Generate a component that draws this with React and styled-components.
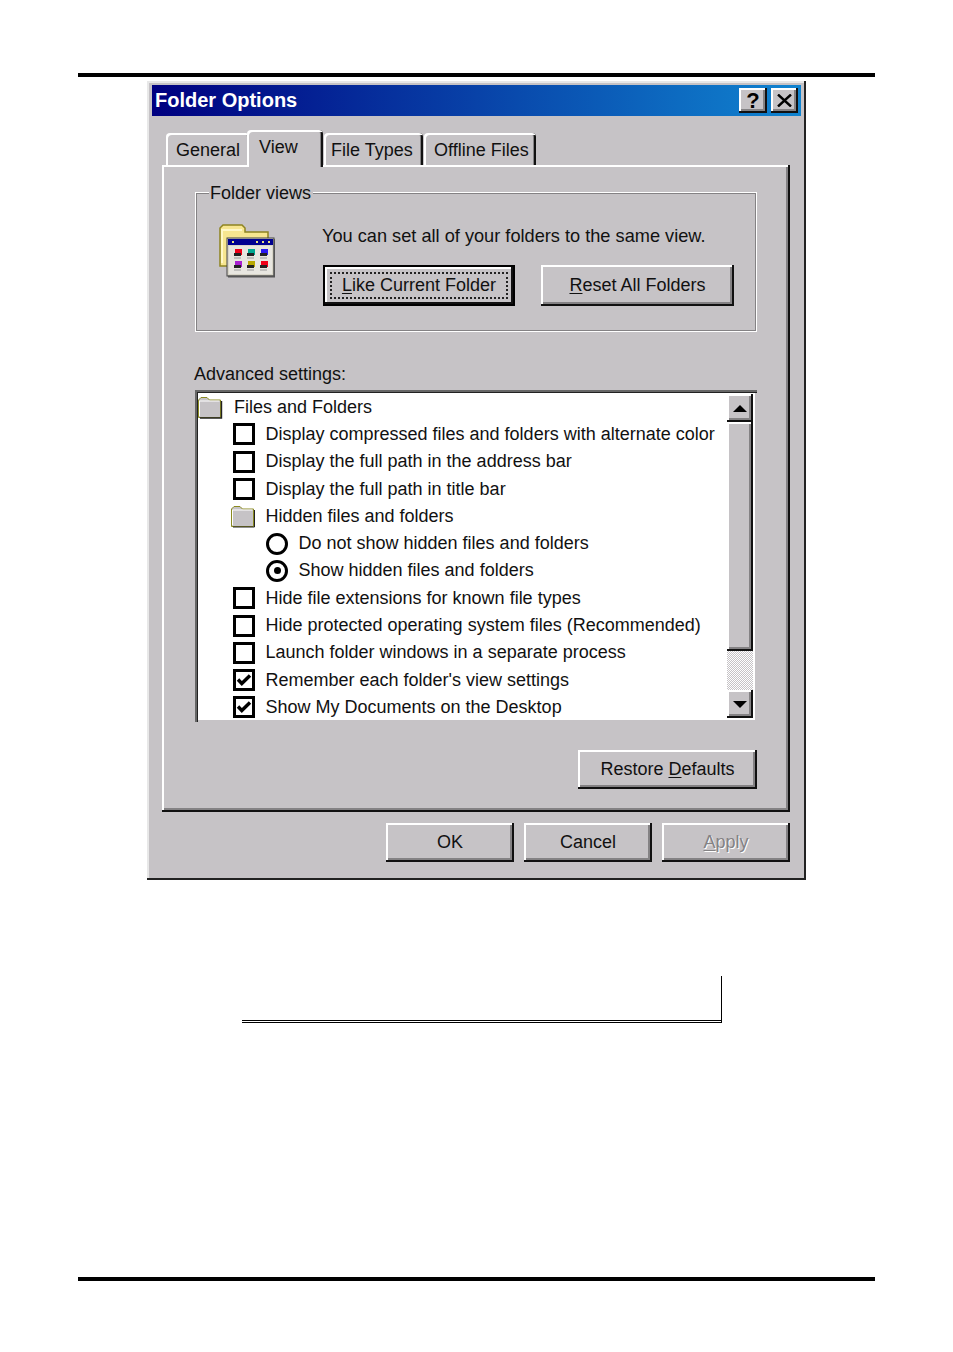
import React from "react";
import styled, { createGlobalStyle, css } from "styled-components";

const FACE = "#c6c3c6";
const FONT = `"Liberation Sans", Arial, sans-serif`;

const raised = css`
  box-shadow: inset -2px -2px 0 #111, inset 2px 2px 0 #fff, inset -4px -4px 0 #848284;
`;

const GlobalStyle = createGlobalStyle`
  html, body { margin: 0; padding: 0; background: #fff; }
  body { font-family: ${FONT}; color: #111; }
`;

const Page = styled.div`
  width: 953px;
  height: 1352px;
  display: flex;
  flex-direction: column;
  align-items: center;
  padding-top: 73px;
  box-sizing: border-box;
  overflow: hidden;
`;

const Rule = styled.div`
  width: 797px;
  height: 4px;
  background: #000;
  flex: none;
`;

const BottomRule = styled(Rule)`
  margin-top: 254px;
`;

const Dialog = styled.div`
  width: 659px;
  height: 799px;
  margin-top: 4px;
  box-sizing: border-box;
  padding: 4px 5px 0;
  background: ${FACE};
  box-shadow: inset -2px -2px 0 #222, inset 2px 2px 0 #e8e8e8;
  flex: none;
`;

const TitleBar = styled.div`
  height: 31px;
  display: flex;
  align-items: center;
  padding: 0 3px;
  background: linear-gradient(90deg, #000080, #1084d0);
  color: #fff;
  font-size: 20px;
  font-weight: 700;
`;

const TitleText = styled.span`
  flex: 1;
`;

const TitleButton = styled.button`
  width: ${(p) => p.$w}px;
  height: 25px;
  margin-left: ${(p) => (p.$gap ? "4px" : "0")};
  padding: 0;
  border: 0;
  background: ${FACE};
  ${raised}
  display: flex;
  align-items: center;
  justify-content: center;
  font: 700 22px ${FONT};
  color: #000;
`;

const Body = styled.div`
  padding: 14px 11px 0 10px;
`;

const TabStrip = styled.div`
  height: 35px;
  display: flex;
  align-items: flex-end;
  padding-left: 4px;
  position: relative;
  z-index: 1;
`;

const Tab = styled.div`
  width: ${(p) => p.$w}px;
  height: ${(p) => (p.$active ? 37 : 32)}px;
  margin-bottom: ${(p) => (p.$active ? -2 : 0)}px;
  margin-left: ${(p) => (p.$active ? -4 : 0)}px;
  margin-right: 1px;
  box-sizing: border-box;
  padding: 5px 0 0 ${(p) => p.$pad}px;
  background: ${FACE};
  font-size: 18px;
  line-height: 24px;
  white-space: nowrap;
  border-radius: 4px 4px 0 0;
  position: relative;
  z-index: ${(p) => (p.$active ? 1 : 0)};
  box-shadow: inset 2px 2px 0 #fff, inset -2px 0 0 #111, inset -3px 0 0 #848284;
`;

const Panel = styled.div`
  height: 647px;
  box-sizing: border-box;
  padding: 27px 33px 0 33px;
  ${raised}
`;

const Group = styled.fieldset`
  height: 140px;
  margin: 0;
  padding: 0 0 0 14px;
  box-sizing: border-box;
  border: 0;
  box-shadow: inset 0 0 0 1px #fff, inset 1px 1px 0 1px #848284, inset -1px -1px 0 1px #848284;
  position: relative;
`;

const Legend = styled.span`
  position: absolute;
  left: 14px;
  top: -11px;
  padding: 0 2px 0 1px;
  background: ${FACE};
  font-size: 18px;
  line-height: 24px;
`;

const GroupRow = styled.div`
  display: flex;
  padding-top: 32px;
`;

const FolderViewIcon = styled.svg`
  width: 56px;
  height: 54px;
  margin-left: 10px;
  flex: none;
`;

const GroupContent = styled.div`
  margin-left: 48px;
`;

const GroupText = styled.div`
  font-size: 18.2px;
  line-height: 24px;
  white-space: nowrap;
  margin-left: -1px;
`;

const ButtonRow = styled.div`
  display: flex;
  gap: 26px;
  margin-top: 17px;
`;

const Button = styled.button`
  width: ${(p) => p.$w}px;
  height: ${(p) => p.$h || 39}px;
  padding: 0;
  border: 0;
  background: ${FACE};
  color: ${(p) => (p.disabled ? "#848284" : "#111")};
  text-shadow: ${(p) => (p.disabled ? "1px 1px 0 #fff" : "none")};
  font: 18px ${FONT};
  flex: none;
  position: relative;
  ${(p) =>
    p.$focus
      ? css`
          box-shadow: inset 0 0 0 2px #000, inset -4px -4px 0 #111, inset 4px 4px 0 #fff;
          &::after {
            content: "";
            position: absolute;
            inset: 7px;
            border: 2px dotted #222;
          }
        `
      : raised}
`;

const AdvancedLabel = styled.div`
  margin-top: 30px;
  font-size: 18px;
  line-height: 24px;
  margin-left: -1px;
`;

const ListBox = styled.div`
  height: 332px;
  margin-top: 4px;
  box-sizing: border-box;
  padding: 4px;
  display: flex;
  background: #fff;
  box-shadow: inset 2px 2px 0 #666, inset 3px 3px 0 #222, inset -2px -2px 0 ${FACE};
  overflow: hidden;
`;

const List = styled.div`
  flex: 1;
  min-width: 0;
  margin-top: -0.5px;
`;

const Row = styled.div`
  height: 27.3px;
  display: flex;
  align-items: center;
  padding-left: ${(p) => Math.max(p.$indent, 0)}px;
  margin-left: ${(p) => Math.min(p.$indent, 0)}px;
  font-size: 18px;
  white-space: nowrap;
`;

const RowIcon = styled.span`
  width: ${(p) => p.$w}px;
  flex: none;
  display: flex;
`;

const Check = styled.span`
  width: 16px;
  height: 16px;
  border: 3.5px solid #000;
  display: flex;
  align-items: center;
  justify-content: center;
`;

const Radio = styled(Check)`
  border-width: 3px;
  border-radius: 50%;
`;

const RadioDot = styled.span`
  width: 7px;
  height: 7px;
  border-radius: 50%;
  background: #000;
`;

const Scrollbar = styled.div`
  width: 26px;
  flex: none;
  display: flex;
  flex-direction: column;
`;

const ScrollButton = styled.div`
  height: 28px;
  flex: none;
  background: ${FACE};
  ${raised}
  display: flex;
  align-items: center;
  justify-content: center;
`;

const Arrow = styled.span`
  width: 0;
  height: 0;
  border-left: 7px solid transparent;
  border-right: 7px solid transparent;
  ${(p) => (p.$down ? "border-top: 7px solid #000;" : "border-bottom: 7px solid #000;")}
`;

const Thumb = styled.div`
  height: 229px;
  flex: none;
  background: ${FACE};
  ${raised}
`;

const Track = styled.div`
  flex: 1;
  background-color: #fff;
  background-image: conic-gradient(${FACE} 25%, #fff 0 50%, ${FACE} 0 75%, #fff 0);
  background-size: 2px 2px;
`;

const RestoreRow = styled.div`
  display: flex;
  justify-content: flex-end;
  margin-top: 28px;
`;

const FooterRow = styled.div`
  display: flex;
  justify-content: flex-end;
  gap: 10px;
  padding-top: 11px;
`;

const Figure = styled.div`
  width: 480px;
  height: 47px;
  margin: 96px 0 0 11px;
  box-sizing: border-box;
  flex: none;
  border-right: 1px solid #000;
  border-bottom: 3px double #000;
`;

const Key = styled.u`
  text-underline-offset: 2px;
`;

const FolderIcon = ({ small }) => (
  <svg width="26" height="23" viewBox="0 0 26 23" aria-hidden="true">
    <path d="M1.5 21.5V4L4 1.5h6L12.5 4h11v17.5z" fill={FACE} stroke="#8a8a20" strokeWidth="1" />
    <path d="M2.5 20V5h20" fill="none" stroke="#fff" strokeWidth="1" />
    <path d="M24.5 5v17H3" fill="none" stroke="#222" strokeWidth={small ? 1 : 1.4} />
  </svg>
);

const cells = [
  ["#f00018", 15], ["#00a890", 28], ["#2818f0", 41],
  ["#a820d0", 15], ["#b8a800", 28], ["#f00018", 41],
];

const FolderView = () => (
  <FolderViewIcon viewBox="0 0 56 54" aria-hidden="true">
    <path d="M1 42V4l3-3h19l3 3v4h23v34z" fill="#f7e690" stroke="#8f8420" strokeWidth="1.5" />
    <path d="M3 39V6h20" fill="none" stroke="#fff8c8" strokeWidth="2" />
    <rect x="8" y="14" width="47" height="38" fill="#d8d5c8" stroke="#444" strokeWidth="1" />
    <path d="M9 52.5h46.5V15" fill="none" stroke="#555" strokeWidth="2" />
    <rect x="9" y="15" width="45" height="6" fill="#000090" />
    <path d="M13 18h2M37 18h2M43 18h2M49 18h2" stroke="#e8e080" strokeWidth="2" />
    <rect x="10" y="22" width="43" height="28" fill="#e8e6e0" />
    {cells.map(([color, x], i) => {
      const y = i < 3 ? 25 : 37;
      return (
        <g key={i}>
          <rect x={x + 1} y={y} width="7" height="6" fill={color} />
          <rect x={x} y={y + 4} width="7" height="3" fill="#222" />
          <path d={`M${x} ${y + 9}h7`} stroke="#999" strokeWidth="1" />
        </g>
      );
    })}
  </FolderViewIcon>
);

const Tick = () => (
  <svg width="16" height="16" viewBox="0 0 16 16" aria-hidden="true">
    <path d="M2 7.5l3.8 4L14 3.5" fill="none" stroke="#000" strokeWidth="3.4" />
  </svg>
);

const rows = [
  { kind: "folder", indent: -2, w: 37, text: "Files and Folders" },
  { kind: "check", indent: 34, w: 32.5, text: "Display compressed files and folders with alternate color" },
  { kind: "check", indent: 34, w: 32.5, text: "Display the full path in the address bar" },
  { kind: "check", indent: 34, w: 32.5, text: "Display the full path in title bar" },
  { kind: "folder", indent: 31, w: 35.5, text: "Hidden files and folders" },
  { kind: "radio", indent: 67, w: 32.5, text: "Do not show hidden files and folders" },
  { kind: "radio", on: true, indent: 67, w: 32.5, text: "Show hidden files and folders" },
  { kind: "check", indent: 34, w: 32.5, text: "Hide file extensions for known file types" },
  { kind: "check", indent: 34, w: 32.5, text: "Hide protected operating system files (Recommended)" },
  { kind: "check", indent: 34, w: 32.5, text: "Launch folder windows in a separate process" },
  { kind: "check", on: true, indent: 34, w: 32.5, text: "Remember each folder's view settings" },
  { kind: "check", on: true, indent: 34, w: 32.5, text: "Show My Documents on the Desktop" },
];

const SettingRow = ({ kind, on, indent, w, text }) => (
  <Row $indent={indent}>
    <RowIcon $w={w}>
      {kind === "folder" && <FolderIcon small={indent > 0} />}
      {kind === "check" && <Check>{on && <Tick />}</Check>}
      {kind === "radio" && <Radio>{on && <RadioDot />}</Radio>}
    </RowIcon>
    {text}
  </Row>
);

export default function App() {
  return (
    <Page>
      <GlobalStyle />
      <Rule />
      <Dialog>
        <TitleBar>
          <TitleText>Folder Options</TitleText>
          <TitleButton $w={28}>?</TitleButton>
          <TitleButton $w={27} $gap>
            <svg width="15" height="13" viewBox="0 0 15 13" aria-hidden="true">
              <path d="M1 0.5l13 12M14 0.5l-13 12" stroke="#000" strokeWidth="2.4" />
            </svg>
          </TitleButton>
        </TitleBar>
        <Body>
          <TabStrip>
            <Tab $w={84} $pad={10}>General</Tab>
            <Tab $w={76} $pad={12} $active>View</Tab>
            <Tab $w={99} $pad={7}>File Types</Tab>
            <Tab $w={112} $pad={10}>Offline Files</Tab>
          </TabStrip>
          <Panel>
            <Group>
              <Legend>Folder views</Legend>
              <GroupRow>
                <FolderView />
                <GroupContent>
                  <GroupText>You can set all of your folders to the same view.</GroupText>
                  <ButtonRow>
                    <Button $w={192} $h={41} $focus><Key>L</Key>ike Current Folder</Button>
                    <Button $w={193} $h={41}><Key>R</Key>eset All Folders</Button>
                  </ButtonRow>
                </GroupContent>
              </GroupRow>
            </Group>
            <AdvancedLabel>Advanced settings:</AdvancedLabel>
            <ListBox>
              <List>
                {rows.map((row) => (
                  <SettingRow key={row.text} {...row} />
                ))}
              </List>
              <Scrollbar>
                <ScrollButton><Arrow /></ScrollButton>
                <Thumb />
                <Track />
                <ScrollButton><Arrow $down /></ScrollButton>
              </Scrollbar>
            </ListBox>
            <RestoreRow>
              <Button $w={179}>Restore <Key>D</Key>efaults</Button>
            </RestoreRow>
          </Panel>
          <FooterRow>
            <Button $w={128}>OK</Button>
            <Button $w={128}>Cancel</Button>
            <Button $w={128} disabled><Key>A</Key>pply</Button>
          </FooterRow>
        </Body>
      </Dialog>
      <Figure />
      <BottomRule />
    </Page>
  );
}
